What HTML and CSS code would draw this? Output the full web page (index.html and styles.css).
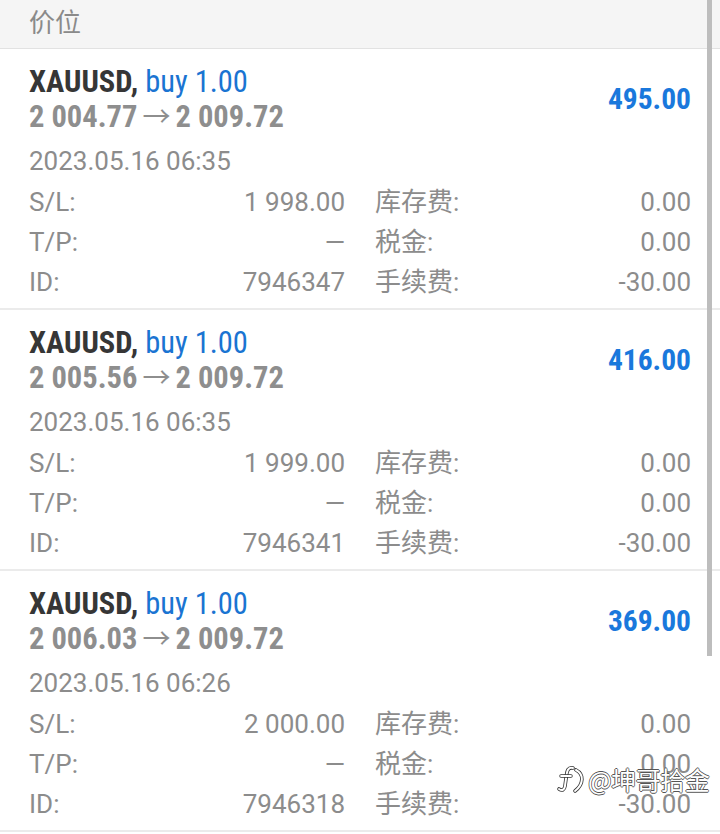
FILE: index.html
```html
<!DOCTYPE html>
<html lang="zh">
<head>
<meta charset="utf-8">
<link rel="stylesheet" href="styles.css">
</head>
<body>
<div class="screen">
  <div class="header">价位</div>

  <div class="card">
    <div class="title-row">
      <div class="title-block">
        <div class="t1"><span class="sym">XAUUSD,</span> <span class="side">buy 1.00</span></div>
        <div class="t2">2 004.77 <span class="arrow">→</span> 2 009.72</div>
      </div>
      <div class="profit">495.00</div>
    </div>
    <div class="date">2023.05.16 06:35</div>
    <div class="rows">
      <div class="half"><span>S/L:</span><span>1 998.00</span></div>
      <div class="half"><span>库存费:</span><span>0.00</span></div>
      <div class="half"><span>T/P:</span><span>—</span></div>
      <div class="half"><span>税金:</span><span>0.00</span></div>
      <div class="half"><span>ID:</span><span>7946347</span></div>
      <div class="half"><span>手续费:</span><span>-30.00</span></div>
    </div>
  </div>

  <div class="card">
    <div class="title-row">
      <div class="title-block">
        <div class="t1"><span class="sym">XAUUSD,</span> <span class="side">buy 1.00</span></div>
        <div class="t2">2 005.56 <span class="arrow">→</span> 2 009.72</div>
      </div>
      <div class="profit">416.00</div>
    </div>
    <div class="date">2023.05.16 06:35</div>
    <div class="rows">
      <div class="half"><span>S/L:</span><span>1 999.00</span></div>
      <div class="half"><span>库存费:</span><span>0.00</span></div>
      <div class="half"><span>T/P:</span><span>—</span></div>
      <div class="half"><span>税金:</span><span>0.00</span></div>
      <div class="half"><span>ID:</span><span>7946341</span></div>
      <div class="half"><span>手续费:</span><span>-30.00</span></div>
    </div>
  </div>

  <div class="card">
    <div class="title-row">
      <div class="title-block">
        <div class="t1"><span class="sym">XAUUSD,</span> <span class="side">buy 1.00</span></div>
        <div class="t2">2 006.03 <span class="arrow">→</span> 2 009.72</div>
      </div>
      <div class="profit">369.00</div>
    </div>
    <div class="date">2023.05.16 06:26</div>
    <div class="rows">
      <div class="half"><span>S/L:</span><span>2 000.00</span></div>
      <div class="half"><span>库存费:</span><span>0.00</span></div>
      <div class="half"><span>T/P:</span><span>—</span></div>
      <div class="half"><span>税金:</span><span>0.00</span></div>
      <div class="half"><span>ID:</span><span>7946318</span></div>
      <div class="half"><span>手续费:</span><span>-30.00</span></div>
    </div>
  </div>

  <div class="scrollbar"></div>

  <div class="watermark">
    <svg class="wm-logo" width="30" height="30" viewBox="0 0 30 30">
      <path d="M17 4 C12 3 11 7 10.5 11 L9 22 C8.5 26 6 27 3 25" fill="none" stroke="#333" stroke-width="3.6" stroke-linecap="round"/>
      <path d="M17 4 C12 3 11 7 10.5 11 L9 22 C8.5 26 6 27 3 25" fill="none" stroke="#fff" stroke-width="2" stroke-linecap="round"/>
      <path d="M5 12 L15 12" fill="none" stroke="#333" stroke-width="3.4" stroke-linecap="round"/>
      <path d="M5 12 L15 12" fill="none" stroke="#fff" stroke-width="1.8" stroke-linecap="round"/>
      <path d="M20 6 C28 10 28 20 19 27" fill="none" stroke="#333" stroke-width="3.6" stroke-linecap="round"/>
      <path d="M20 6 C28 10 28 20 19 27" fill="none" stroke="#fff" stroke-width="2" stroke-linecap="round"/>
    </svg>
    <span class="wm-text">@坤哥拾金</span>
  </div>
</div>
</body>
</html>
```

FILE: styles.css
```css
* { box-sizing: border-box; }

html, body {
  margin: 0;
  padding: 0;
  background: #ffffff;
}

.screen {
  position: relative;
  width: 720px;
  height: 834px;
  overflow: hidden;
  background: #ffffff;
  font-family: Roboto, "Noto Sans CJK SC", sans-serif;
  color: #8c8c8c;
}

.header {
  height: 49px;
  background: #f5f5f5;
  border-bottom: 1px solid #e2e2e2;
  padding-left: 29px;
  font-size: 26px;
  line-height: 42px;
  color: #8a8a8a;
  font-family: "Noto Sans CJK SC", sans-serif;
}

.card {
  padding: 15px 29px 7px 29px;
  border-bottom: 2px solid #ebebeb;
  height: 261px;
}

.title-row {
  display: flex;
  justify-content: space-between;
  align-items: center;
}

.title-block {
  font-family: "Roboto Condensed", "Liberation Sans Narrow", "DejaVu Sans Condensed", Roboto, sans-serif;
  font-stretch: condensed;
  font-size: 30.5px;
  line-height: 35px;
}

.t1 .sym {
  font-weight: 700;
  color: #363636;
}

.t1 .side {
  color: #1a74d2;
}

.t2 {
  font-weight: 700;
  color: #8e8e8e;
  height: 35px;
}

.t2 .arrow {
  font-weight: 400;
  font-family: "Noto Sans CJK SC", sans-serif;
  font-size: 28px;
  line-height: 0;
  margin: 0 -2px;
  color: #8e8e8e;
}

.profit {
  font-family: "Roboto Condensed", "Liberation Sans Narrow", "DejaVu Sans Condensed", Roboto, sans-serif;
  font-stretch: condensed;
  font-weight: 700;
  font-size: 29.5px;
  color: #1a78dc;
}

.date {
  margin-top: 7px;
  font-size: 26px;
  line-height: 40px;
}

.rows {
  margin-top: 1px;
  display: grid;
  grid-template-columns: 1fr 1fr;
  column-gap: 30px;
  font-size: 26px;
  line-height: 40px;
}

.half {
  display: flex;
  justify-content: space-between;
}

.scrollbar {
  position: absolute;
  left: 707px;
  top: 0;
  width: 5px;
  height: 656px;
  background: #bdbdbd;
}

.watermark {
  position: absolute;
  left: 556px;
  top: 762px;
  display: flex;
  align-items: center;
  gap: 2px;
}

.wm-text {
  font-family: "Noto Sans CJK SC", sans-serif;
  font-size: 25px;
  line-height: 34px;
  color: #ffffff;
  letter-spacing: -0.5px;
  text-shadow:
    0.8px 0 0 #555, -0.8px 0 0 #555, 0 0.8px 0 #555, 0 -0.8px 0 #555;
}
```
